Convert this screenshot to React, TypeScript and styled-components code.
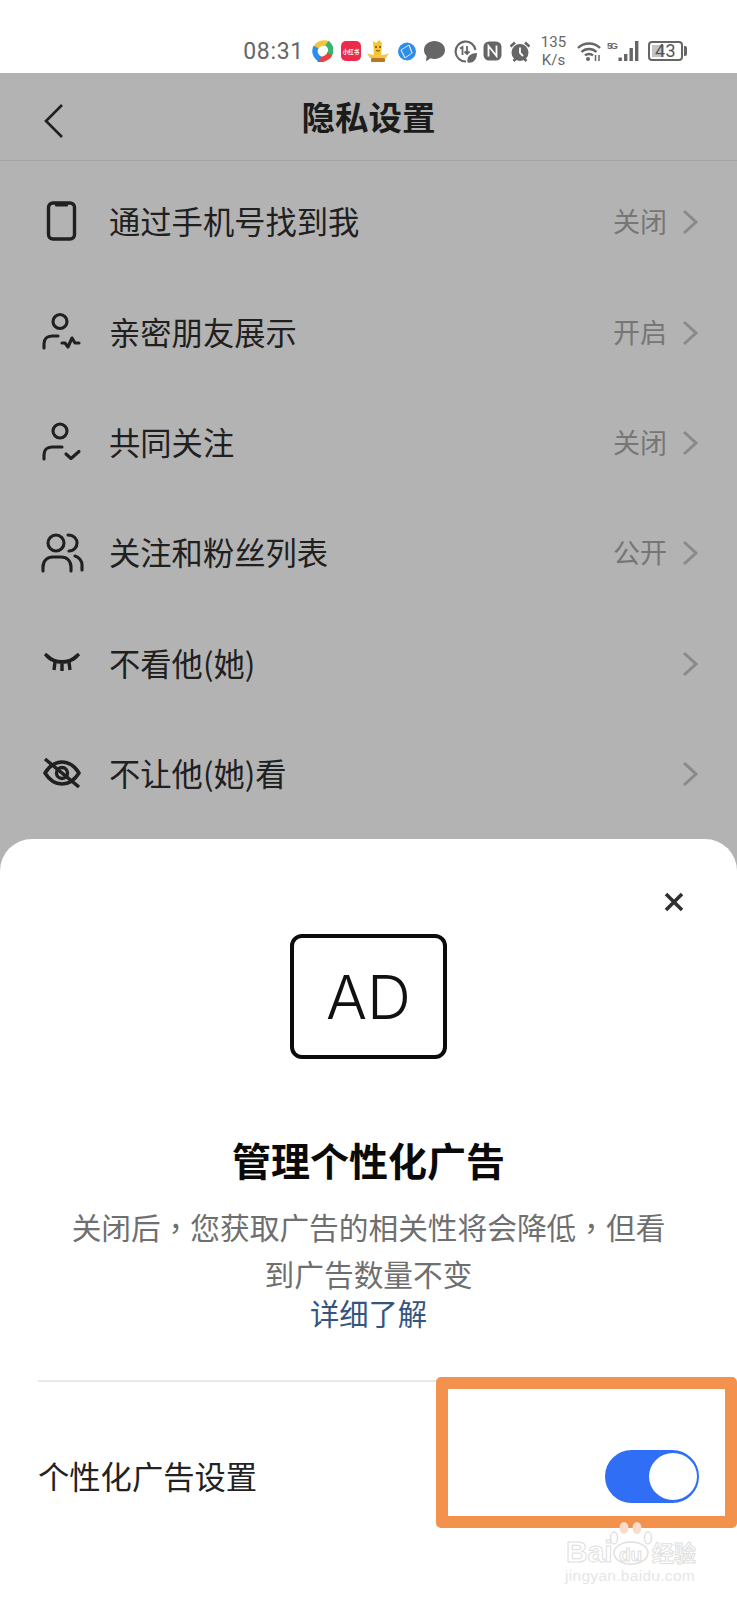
import React from "react";
import styled, { createGlobalStyle } from "styled-components";

const cjk = `"Noto Sans CJK SC", "Noto Sans", sans-serif`;

const GlobalStyle = createGlobalStyle`
  html, body {
    margin: 0;
    padding: 0;
    background: #fff;
    font-family: ${cjk};
  }
`;

const Page = styled.div`
  position: relative;
  width: 737px;
  height: 1600px;
  overflow: hidden;
  display: flex;
  flex-direction: column;
  background: #b3b3b3;
`;

const StatusBar = styled.div`
  flex: none;
  height: 73px;
  box-sizing: border-box;
  padding: 29px 50px 0 0;
  display: flex;
  align-items: center;
  justify-content: flex-end;
  background: #fff;
`;

const Time = styled.span`
  font: 400 23px Roboto, sans-serif;
  letter-spacing: 0.7px;
  color: #666;
`;

const StatusIcon = styled.svg<{ $gap: number }>`
  flex: none;
  margin-left: ${(p) => p.$gap}px;
  display: block;
`;

const Speed = styled.div`
  margin-left: 10px;
  width: 27px;
  font: 400 15px/18px Roboto, sans-serif;
  text-align: center;
  color: #666;
`;

const Battery = styled.div`
  margin-left: 8px;
  width: 35px;
  height: 20px;
  box-sizing: border-box;
  border: 2px solid #666;
  border-radius: 4px;
  padding: 2px;
  position: relative;
  display: flex;
  align-items: stretch;
`;

const BatteryFill = styled.div`
  width: 43%;
  background: #c4c4c4;
`;

const BatteryText = styled.span`
  position: absolute;
  inset: 0;
  text-align: center;
  font: 400 18px/16px Roboto, sans-serif;
  letter-spacing: 0.5px;
  color: #555;
`;

const BatteryTip = styled.div`
  margin-left: 1px;
  width: 3px;
  height: 10px;
  border-radius: 0 2px 2px 0;
  background: #666;
`;

const NavBar = styled.header`
  flex: none;
  height: 87px;
  position: relative;
  display: flex;
  align-items: center;
  justify-content: center;
  border-bottom: 1px solid #a6a6a6;
`;

const BackButton = styled.svg`
  position: absolute;
  left: 43px;
  top: 30px;
`;

const NavTitle = styled.h1`
  margin: 0 0 2px;
  font-size: 33.5px;
  font-weight: 700;
  line-height: 46px;
  color: #1b1b1b;
`;

const List = styled.ul`
  list-style: none;
  margin: 0;
  padding: 5px 0 0;
`;

const Row = styled.li`
  height: 110.4px;
  box-sizing: border-box;
  padding: 0 39px 0 40px;
  display: flex;
  align-items: center;
`;

const RowIcon = styled.div`
  flex: none;
  width: 44px;
  margin-right: 25px;
  display: flex;
  justify-content: center;
`;

const RowLabel = styled.span`
  flex: 1;
  font-size: 31.3px;
  line-height: 44px;
  color: #202020;
`;

const RowValue = styled.span`
  font-size: 27px;
  line-height: 40px;
  color: #767676;
`;

const Chevron = styled.svg`
  flex: none;
  margin: 2px 0 0 15px;
`;

const Sheet = styled.section`
  position: absolute;
  left: 0;
  right: 0;
  top: 839px;
  bottom: 0;
  background: #fff;
  border-radius: 32px 32px 0 0;
  display: flex;
  flex-direction: column;
  align-items: center;
`;

const CloseButton = styled.svg`
  position: absolute;
  right: 53px;
  top: 53px;
`;

const AdBox = styled.div`
  margin-top: 95px;
  width: 157px;
  height: 125px;
  box-sizing: border-box;
  border: 4px solid #0b0b0b;
  border-radius: 12px;
  display: flex;
  align-items: center;
  justify-content: center;
  font: 300 61px Inter, Lato, sans-serif;
  color: #111;
`;

const SheetTitle = styled.h2`
  margin: 72px 0 0;
  font-size: 39px;
  font-weight: 700;
  line-height: 56px;
  color: #0a0a0a;
`;

// TC face: the reference sets its commas in the middle of the em box
const Description = styled.p`
  margin: 16px 0 0;
  width: 610px;
  font-family: "Noto Sans CJK TC", sans-serif;
  font-size: 29.7px;
  line-height: 47px;
  text-align: center;
  color: #6f6f6f;
`;

const MoreLink = styled.a`
  margin-top: -7px;
  font-size: 29.3px;
  line-height: 44px;
  color: #35557f;
`;

const Divider = styled.hr`
  align-self: stretch;
  margin: 46px 38px 0;
  border: none;
  height: 2px;
  background: #e8e8e8;
`;

const SettingRow = styled.div`
  align-self: stretch;
  height: 188px;
  padding: 0 38px;
  display: flex;
  align-items: center;
  justify-content: space-between;
  box-sizing: border-box;
`;

const SettingLabel = styled.span`
  font-size: 31.3px;
  line-height: 44px;
  color: #222;
`;

const Toggle = styled.div<{ $on: boolean }>`
  width: 94px;
  height: 53px;
  box-sizing: border-box;
  padding: 3px 2px;
  border-radius: 27px;
  background: ${(p) => (p.$on ? "#306ef5" : "#ccc")};
  display: flex;
  justify-content: ${(p) => (p.$on ? "flex-end" : "flex-start")};
`;

const Knob = styled.div`
  width: 48px;
  height: 47px;
  border-radius: 50%;
  background: #fff;
`;

// annotation drawn on top of the screenshot
const Highlight = styled.div`
  position: absolute;
  left: 436px;
  top: 1377px;
  width: 301px;
  height: 151px;
  box-sizing: border-box;
  border: 12px solid #f2924c;
  border-radius: 5px;
`;

const Watermark = styled.div`
  position: absolute;
  left: 564px;
  top: 1520px;
  width: 136px;
  height: 66px;
`;

const WatermarkPaw = styled.svg`
  position: absolute;
  left: 44px;
  top: 0;
`;

const outlined = `
  color: #fff;
  -webkit-text-stroke: 1px #e0e0e0;
  white-space: nowrap;
`;

const WatermarkBrand = styled.span`
  position: absolute;
  left: 2px;
  top: 17px;
  font: 700 30px/30px "Liberation Sans", sans-serif;
  ${outlined}
`;

const WatermarkDu = styled.span`
  position: absolute;
  left: 55px;
  top: 24px;
  font: 700 19px/22px "Liberation Sans", sans-serif;
  ${outlined}
`;

const WatermarkCn = styled.span`
  position: absolute;
  left: 88px;
  top: 18px;
  font: 700 22px/26px ${cjk};
  ${outlined}
`;

const WatermarkUrl = styled.span`
  position: absolute;
  left: 1px;
  top: 46px;
  font: 400 15.5px/20px "Liberation Sans", sans-serif;
  letter-spacing: 0.3px;
  color: #e6e6e6;
  white-space: nowrap;
`;

const stroke = {
  fill: "none",
  stroke: "#202020",
  strokeWidth: 3.1,
  strokeLinecap: "round" as const,
  strokeLinejoin: "round" as const,
};

const PhoneIcon = () => (
  <svg width="32" height="40" viewBox="0 0 32 40">
    <rect x="2.500" y="2" width="26" height="36" rx="4.500" {...stroke} strokeWidth={3.400} />
    <path d="M9 2h13v2.500a1 1 0 0 1-1 1H10a1 1 0 0 1-1-1z" fill="#202020" />
  </svg>
);

const PulseIcon = () => (
  <svg width="40" height="40" viewBox="0 0 40 40">
    <circle cx="18" cy="9.500" r="7" {...stroke} />
    <path d="M2 36v-4c0-5 3-8 8-8h6" {...stroke} />
    <path d="M20 31h3l3 4 4-9 3 5h4" {...stroke} />
  </svg>
);

const CheckUserIcon = () => (
  <svg width="40" height="40" viewBox="0 0 40 40">
    <circle cx="18" cy="9" r="7" {...stroke} />
    <path d="M2 37v-4c0-5 3-8 8-8h10" {...stroke} />
    <path d="M24 32l5 4.500 8-7" {...stroke} />
  </svg>
);

const FriendsIcon = () => (
  <svg width="44" height="42" viewBox="0 0 44 42">
    <circle cx="16" cy="12" r="8" {...stroke} />
    <path d="M28 4c6 0 9 4 9 8s-3 8-8 8" {...stroke} />
    <path d="M3 40v-4c0-6 4-10 10-10h8c6 0 10 4 10 10v4" {...stroke} />
    <path d="M35 25c4 1 7 5 7 9v5" {...stroke} />
  </svg>
);

const LashIcon = () => (
  <svg width="36" height="20" viewBox="0 0 36 20">
    <path d="M3 3c8 8 22 8 30 0" {...stroke} strokeWidth={3.800} strokeLinecap="butt" />
    <path d="M1 1l7 6M35 1l-7 6M11 9l-1 8M25 9l1 8M18 11v7" {...stroke} strokeWidth={3.400} strokeLinecap="butt" />
  </svg>
);

const HiddenIcon = () => (
  <svg width="40" height="30" viewBox="0 0 40 30">
    <path d="M3 15C8 7 14 4 20 4s12 3 17 11c-5 8-11 11-17 11S8 23 3 15z" {...stroke} strokeWidth={3.600} />
    <circle cx="20" cy="15" r="5.500" {...stroke} strokeWidth={3.400} />
    <path d="M3 1l34 28" {...stroke} strokeWidth={3.400} strokeLinecap="butt" />
  </svg>
);

const ChevronRight = () => (
  <Chevron width="16" height="26" viewBox="0 0 16 26">
    <path d="M2 2l12 11L2 24" fill="none" stroke="#8a8a8a" strokeWidth="3" />
  </Chevron>
);

const rows = [
  { icon: <PhoneIcon />, label: "通过手机号找到我", value: "关闭" },
  { icon: <PulseIcon />, label: "亲密朋友展示", value: "开启" },
  { icon: <CheckUserIcon />, label: "共同关注", value: "关闭" },
  { icon: <FriendsIcon />, label: "关注和粉丝列表", value: "公开" },
  { icon: <LashIcon />, label: "不看他(她)" },
  { icon: <HiddenIcon />, label: "不让他(她)看" },
];

const App: React.FC = () => {
  return (
    <Page>
      <GlobalStyle />
      <StatusBar>
        <Time>08:31</Time>
        {/* pinwheel app */}
        <StatusIcon $gap={8} width="21" height="22" viewBox="0 0 21 22" fill="none" strokeWidth="5.500">
          <path d="M4 8C6 3 12 2 16 4" stroke="#f6c43a" />
          <path d="M15 3c4 3 5 8 2 12" stroke="#35b56c" />
          <path d="M18 14c-3 5-8 6-12 5" stroke="#e8433f" />
          <path d="M8 19C3 16 2 11 4 7" stroke="#2c8df0" />
        </StatusIcon>
        {/* red shop app */}
        <StatusIcon $gap={8} width="20" height="20" viewBox="0 0 20 20">
          <rect width="20" height="20" rx="5" fill="#ee2a4a" />
          <text x="10" y="12.500" textAnchor="middle" fontSize="5.500" fontWeight="700" fill="#fff" fontFamily={cjk}>
            小红书
          </text>
        </StatusIcon>
        {/* yellow mascot */}
        <StatusIcon $gap={6} width="22" height="24" viewBox="0 0 22 24">
          <path d="M6 2l3 2 3-3 3 3-1 12H7z" fill="#f7c52e" />
          <circle cx="9" cy="8" r="1" fill="#6b4a10" />
          <circle cx="13" cy="8" r="1" fill="#6b4a10" />
          <path d="M9 11c1 1.500 3 1.500 4 0" fill="none" stroke="#6b4a10" strokeWidth="1" />
          <path d="M0 14c5 3 17 3 22 0l-3 5c-4 1-12 1-16 0z" fill="#f3c64a" />
          <rect x="4" y="19" width="14" height="4" rx="1" fill="#b9781f" />
        </StatusIcon>
        {/* blue globe */}
        <StatusIcon $gap={9} width="18" height="19" viewBox="0 0 18 19">
          <circle cx="9" cy="9.500" r="9" fill="#2f8fe8" />
          <path d="M3 8l8-5 3 8-7 5zM3 8l4 8M11 3l3 8" fill="none" stroke="#cfe6fb" strokeWidth="1" />
        </StatusIcon>
        {/* message bubble */}
        <StatusIcon $gap={8} width="21" height="21" viewBox="0 0 21 21">
          <path d="M10.500 0C16 0 21 3.600 21 9s-5 9-10.500 9c-1.500 0-3-.3-4-.7L2 20.500l.6-5.500C1 13.500 0 11.500 0 9 0 3.600 5 0 10.500 0z" fill="#666" />
        </StatusIcon>
        {/* leaf timer */}
        <StatusIcon $gap={9} width="23" height="23" viewBox="0 0 23 23">
          <path d="M12 21.500A10 10 0 1 1 21.500 10" fill="none" stroke="#666" strokeWidth="2.200" />
          <path d="M6 8.500l2.500-1.500v8M13 6v8M10.500 11.500l2.500 2.500 2.500-2.500" fill="none" stroke="#666" strokeWidth="1.800" />
          <path d="M13.500 22.500c-1-6 3-9.500 9.500-9.500 0 6-3 10.500-9.500 9.500z" fill="#666" />
        </StatusIcon>
        {/* NFC */}
        <StatusIcon $gap={6} width="19" height="20" viewBox="0 0 19 20">
          <rect x="1.500" y="1.500" width="16" height="17" rx="4.500" fill="#666" stroke="#666" strokeWidth="2" />
          <path d="M5.500 15.500V5l8 10V4.500" fill="none" stroke="#fff" strokeWidth="1.800" />
        </StatusIcon>
        {/* alarm clock */}
        <StatusIcon $gap={8} width="20" height="21" viewBox="0 0 20 21">
          <circle cx="10" cy="11.500" r="8.500" fill="#666" />
          <path d="M0.500 5.500L5 1.500M19.500 5.500L15 1.500M3.500 20l2.500-2.500M16.500 20L14 17.500" stroke="#666" strokeWidth="2.600" />
          <path d="M10 6.500v5.500l3 3" fill="none" stroke="#fff" strokeWidth="1.800" />
        </StatusIcon>
        <Speed>
          135
          <br />
          K/s
        </Speed>
        {/* wifi */}
        <StatusIcon $gap={10} width="24" height="20" viewBox="0 0 24 20">
          <path d="M1 7c6-6 16-6 22 0M4.500 11c4-4 11-4 15 0M8 14.500c2-2 6-2 8 0" fill="none" stroke="#666" strokeWidth="2.400" />
          <circle cx="11" cy="18" r="2" fill="#666" />
          <path d="M18.500 14v6M22 14v6" stroke="#666" strokeWidth="1.500" />
        </StatusIcon>
        {/* 5G signal */}
        <StatusIcon $gap={6} width="33" height="20" viewBox="0 0 33 20">
          <text x="0" y="8" fontFamily="'Liberation Sans', sans-serif" fontWeight="700" fontSize="9.500" fill="#666" textLength="11">
            5G
          </text>
          <path d="M11.500 16.500h3.400V20h-3.400zM17 13h3.400v7H17zM22.500 7h3.400v13h-3.400zM28 0h3.400v20H28z" fill="#666" />
        </StatusIcon>
        <Battery>
          <BatteryFill />
          <BatteryText>43</BatteryText>
        </Battery>
        <BatteryTip />
      </StatusBar>

      <NavBar>
        <BackButton width="22" height="36" viewBox="0 0 22 36">
          <path d="M19 2L3 18l16 16" fill="none" stroke="#202020" strokeWidth="2.600" />
        </BackButton>
        <NavTitle>隐私设置</NavTitle>
      </NavBar>

      <List>
        {rows.map((row) => (
          <Row key={row.label}>
            <RowIcon>{row.icon}</RowIcon>
            <RowLabel>{row.label}</RowLabel>
            {row.value && <RowValue>{row.value}</RowValue>}
            <ChevronRight />
          </Row>
        ))}
      </List>

      <Sheet>
        <CloseButton width="20" height="20" viewBox="0 0 20 20">
          <path d="M2 2l16 16M18 2L2 18" stroke="#303030" strokeWidth="3.600" />
        </CloseButton>
        <AdBox>AD</AdBox>
        <SheetTitle>管理个性化广告</SheetTitle>
        <Description>关闭后，您获取广告的相关性将会降低，但看到广告数量不变</Description>
        <MoreLink>详细了解</MoreLink>
        <Divider />
        <SettingRow>
          <SettingLabel>个性化广告设置</SettingLabel>
          <Toggle $on>
            <Knob />
          </Toggle>
        </SettingRow>
      </Sheet>

      <Highlight />

      <Watermark>
        <WatermarkBrand>Bai</WatermarkBrand>
        <WatermarkPaw width="50" height="46" viewBox="0 0 50 46">
          <ellipse cx="16" cy="8" rx="4.500" ry="6" fill="#f9dccb" />
          <ellipse cx="29" cy="8" rx="4.500" ry="6" fill="#f9dccb" />
          <ellipse cx="6" cy="18" rx="3.500" ry="6" fill="none" stroke="#e0e0e0" strokeWidth="1.500" />
          <ellipse cx="40" cy="18" rx="3.500" ry="6" fill="none" stroke="#e0e0e0" strokeWidth="1.500" />
          <ellipse cx="23" cy="33" rx="17" ry="11" fill="none" stroke="#e0e0e0" strokeWidth="1.500" />
        </WatermarkPaw>
        <WatermarkDu>du</WatermarkDu>
        <WatermarkCn>经验</WatermarkCn>
        <WatermarkUrl>jingyan.baidu.com</WatermarkUrl>
      </Watermark>
    </Page>
  );
};

export default App;
